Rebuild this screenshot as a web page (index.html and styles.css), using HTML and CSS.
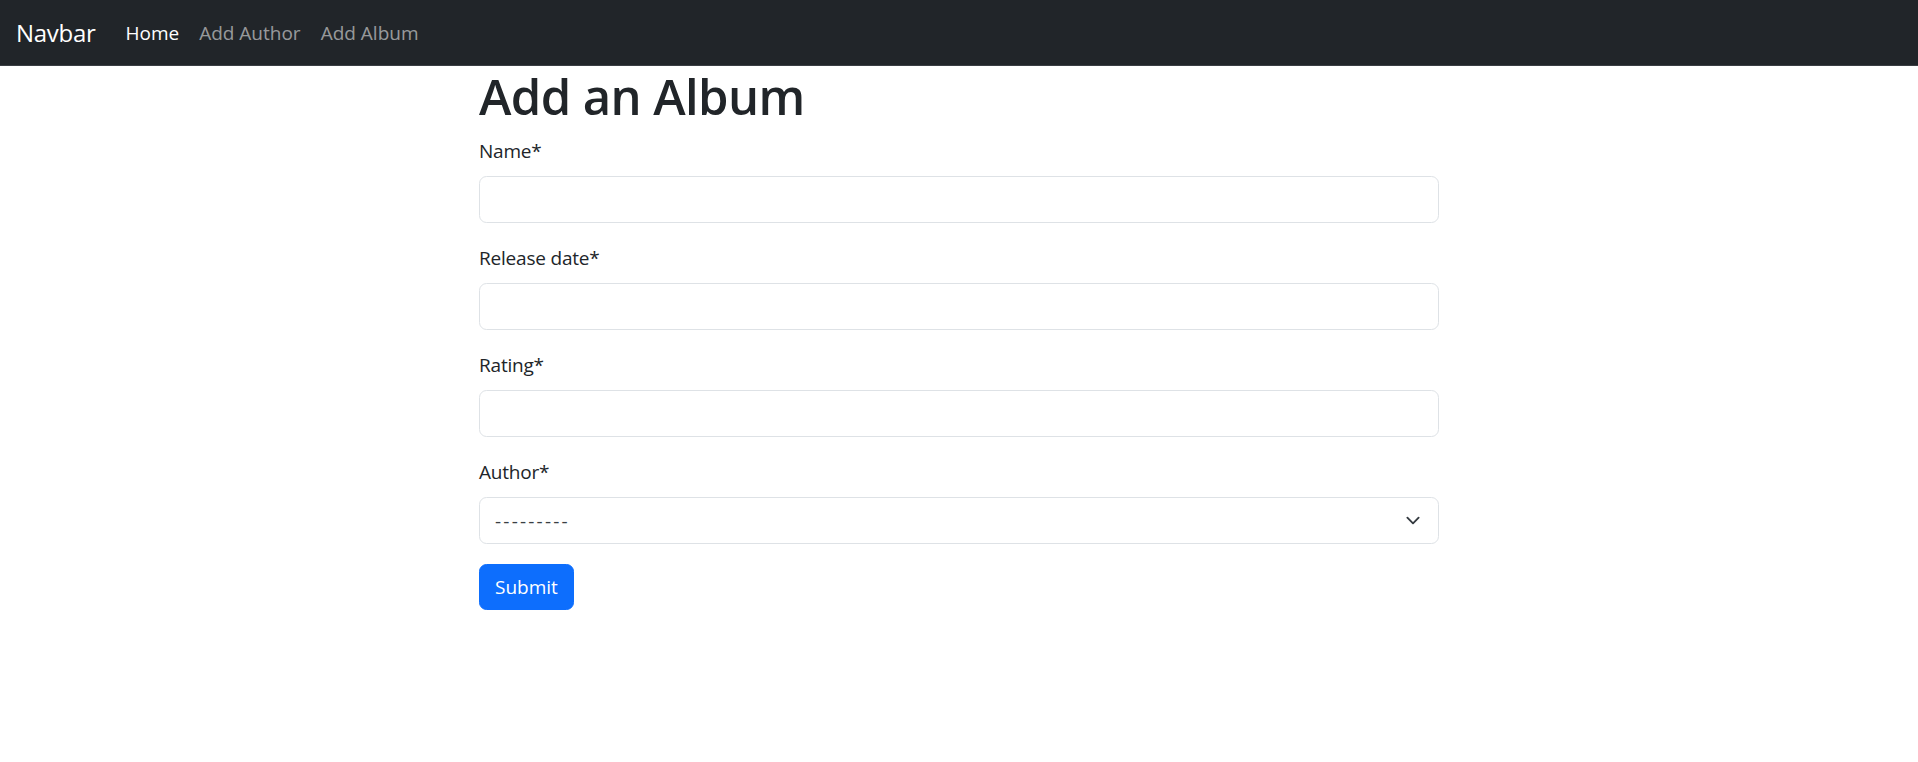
FILE: index.html
```html
<!DOCTYPE html>
<html lang="en">
<head>
<meta charset="utf-8">
<title>Add an Album</title>
<link rel="stylesheet" href="styles.css">
</head>
<body>
<nav class="navbar">
  <a class="brand" href="#">Navbar</a>
  <a class="nav-link active" href="#">Home</a>
  <a class="nav-link" href="#">Add Author</a>
  <a class="nav-link" href="#">Add Album</a>
</nav>
<main class="container">
  <h1 class="title">Add an Album</h1>
  <form class="form">
    <div class="field">
      <label class="label" for="name">Name*</label>
      <input class="input" id="name" type="text">
    </div>
    <div class="field">
      <label class="label" for="release">Release date*</label>
      <input class="input" id="release" type="text">
    </div>
    <div class="field">
      <label class="label" for="rating">Rating*</label>
      <input class="input" id="rating" type="text">
    </div>
    <div class="field">
      <label class="label" for="author">Author*</label>
      <select class="input select" id="author">
        <option>---------</option>
      </select>
    </div>
    <button class="btn" type="submit">Submit</button>
  </form>
</main>
</body>
</html>
```

FILE: styles.css
```css
* {
  box-sizing: border-box;
}

body {
  margin: 0;
  font-family: "Open Sans", "Noto Sans", sans-serif;
  font-size: 19px;
  letter-spacing: -0.2px;
  line-height: 1.5;
  color: #212529;
  background: #fff;
}

.navbar {
  display: flex;
  align-items: center;
  height: 66px;
  padding: 0 16px;
  background: #212529;
  border-bottom: 1px solid #3a3e43;
}

.brand {
  font-size: 24px;
  line-height: 37px;
  letter-spacing: -0.3px;
  color: #fff;
  text-decoration: none;
  margin-right: 20px;
}

.nav-link {
  font-size: 19px;
  line-height: 30px;
  letter-spacing: 0;
  padding: 0 10px;
  color: rgba(255, 255, 255, 0.55);
  text-decoration: none;
}

.nav-link.active {
  color: #fff;
}

.container {
  width: 960px;
  margin: 0 auto;
}

.title {
  margin: 0 0 10px;
  font-size: 49px;
  font-weight: 600;
  letter-spacing: -0.6px;
  line-height: 60px;
}

.field {
  margin-bottom: 20px;
}

.label {
  display: block;
  font-size: 19px;
  line-height: 30px;
  margin-bottom: 10px;
}

.input {
  display: block;
  width: 100%;
  height: 47px;
  padding: 0 15px;
  font-family: inherit;
  font-size: 19px;
  color: #212529;
  background: #fff;
  border: 1px solid #dee2e6;
  border-radius: 7.5px;
  outline: none;
}

.select {
  appearance: none;
  -webkit-appearance: none;
  padding-right: 50px;
  letter-spacing: 2.2px;
  color: #3a3f44;
  background-image: url("data:image/svg+xml,%3csvg xmlns='http://www.w3.org/2000/svg' viewBox='0 0 16 16'%3e%3cpath fill='none' stroke='%23343a40' stroke-linecap='round' stroke-linejoin='round' stroke-width='2' d='m2 5 6 6 6-6'/%3e%3c/svg%3e");
  background-repeat: no-repeat;
  background-position: right 15px center;
  background-size: 20px 15px;
}

.btn {
  display: inline-block;
  padding: 7px 15px;
  font-family: inherit;
  font-size: 19px;
  letter-spacing: 0;
  line-height: 30px;
  color: #fff;
  background: #0d6efd;
  border: 1px solid #0d6efd;
  border-radius: 7.5px;
  cursor: pointer;
}
```
